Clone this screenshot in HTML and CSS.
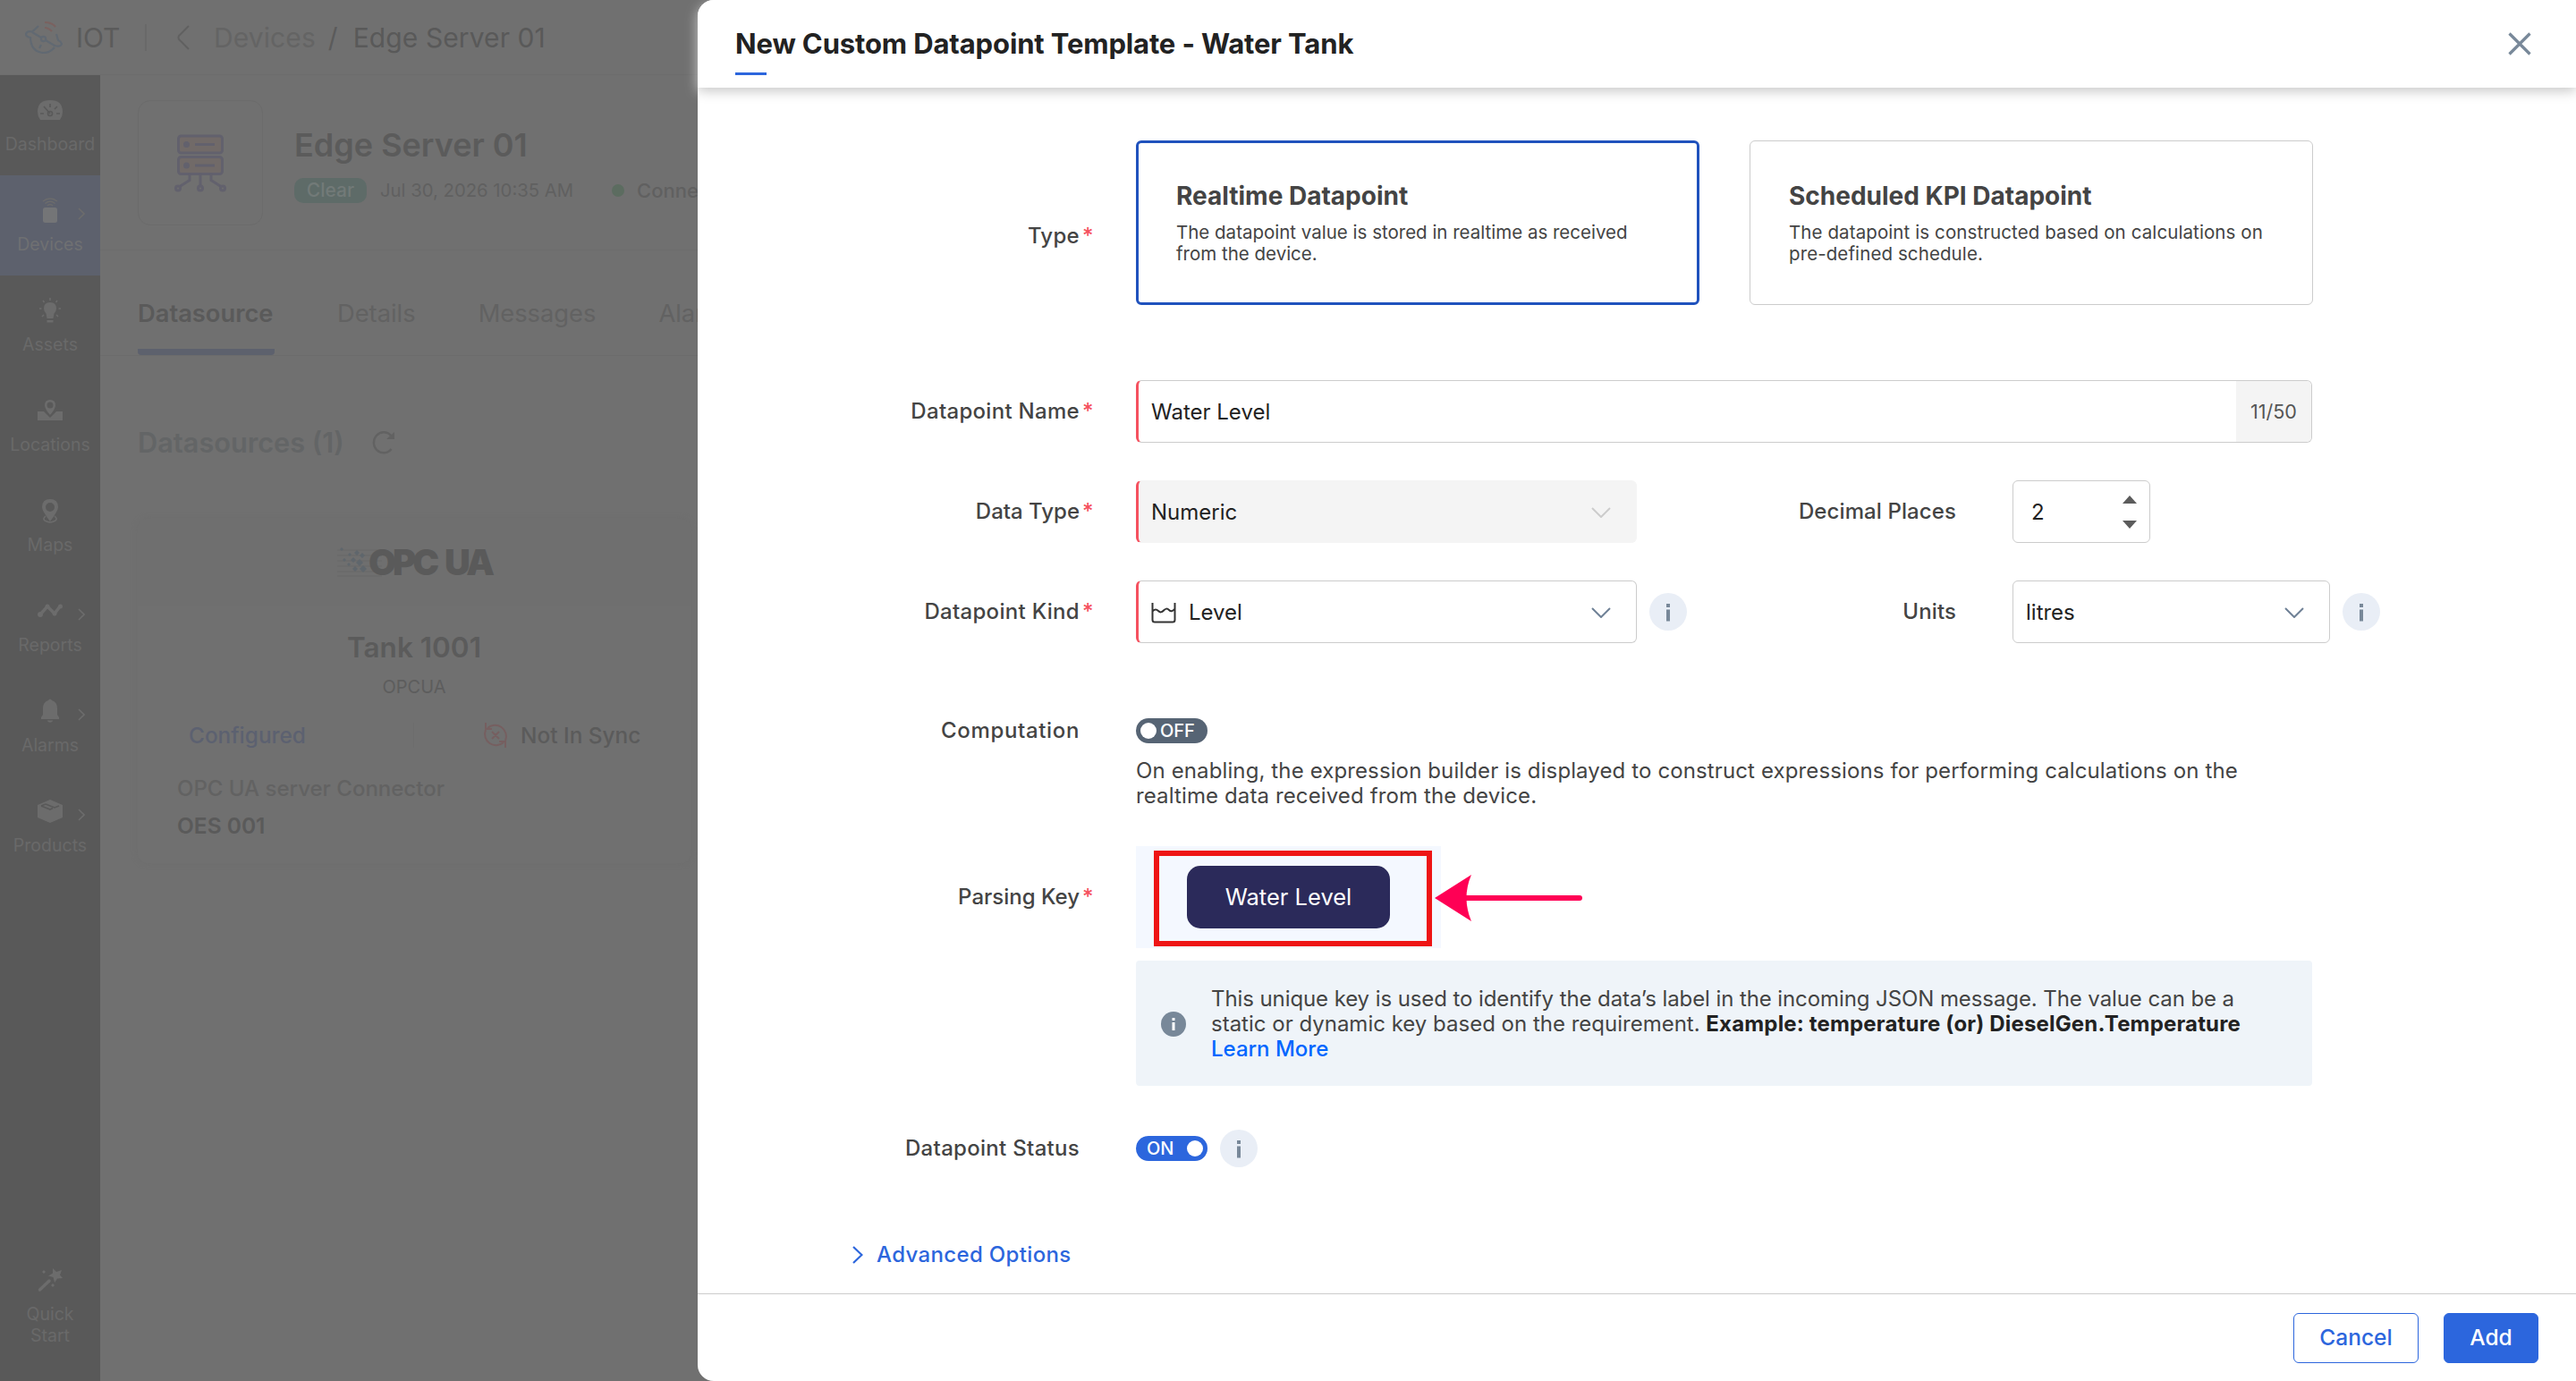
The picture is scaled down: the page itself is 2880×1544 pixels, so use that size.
FILE: index.html
```html
<!DOCTYPE html>
<html lang="en">
  <head>
    <meta charset="UTF-8" />
    <meta name="viewport" content="width=device-width, initial-scale=1.0" />
    <title>New Custom Datapoint Template - Water Tank</title>
    <link rel="stylesheet" href="styles.css" />
  </head>
  <body>
    <header class="topbar">
      <svg class="logo" viewBox="0 0 42 36" fill="none" stroke-width="2.2">
        <g stroke="#616972">
          <path d="M15 5 L8 11.500 Q2 10 1 14 Q1 17 6 18 M8 12 L18 18 M23 21 L33 27 Q40 29 41 25 Q40 22 37 21 L35 14" />
          <path d="M6 17 Q6 34 20.500 35 Q28 35 33 29" />
          <circle cx="20.500" cy="19.500" r="2.600" />
          <path d="M18 26 L16 30" />
        </g>
        <path d="M22 1 Q30 1 34 6 M22 7 Q26 7 30 11" stroke="#7a6260" />
      </svg>
      <span class="brand">IOT</span>
      <span class="topbar-line"></span>
      <svg class="back" viewBox="0 0 14 28"><path d="M13 1 L2 12 Q1 14 2 16 L13 27" /></svg>
      <span class="crumb">Devices</span>
      <span class="slash">/</span>
      <span class="crumb current">Edge Server 01</span>
    </header>

    <div class="page">
      <nav class="sidebar">
        <a class="nav-item">
          <svg viewBox="0 0 28 28">
            <path d="M3 25 Q0 21 0 16 Q0 3 14 3 Q28 3 28 16 Q28 21 25 25 Z" />
            <g class="cut"><path d="M7 10 L14 18 M14 7 V11 M22 10 L19 13 M3 18 H7 M21 18 H25" /><circle cx="14" cy="18" r="2.500" /></g>
          </svg>
          <span>Dashboard</span>
        </a>
        <a class="nav-item active">
          <svg viewBox="0 0 28 28">
            <rect x="6" y="11" width="16" height="17" rx="2.500" />
            <path class="line" d="M6 4 Q14 -2 22 4 M8.500 6.500 Q14 2 19.500 6.500 M11 9 Q14 6 17 9" />
          </svg>
          <span>Devices</span>
          <svg class="more" viewBox="0 0 8 14"><path d="M1 1 L7 7 L1 13" /></svg>
        </a>
        <a class="nav-item">
          <svg viewBox="0 0 28 28">
            <path d="M14 5 Q21 5 21 12 Q21 15 18.500 17.500 L17.500 23 H10.500 L9.500 17.500 Q7 15 7 12 Q7 5 14 5 Z M10.500 25 H17.500 V27.500 H10.500 Z" />
            <path class="line" d="M14 0 V3 M6 3 L7.500 5 M22 3 L20.500 5 M2 12 H4.500 M23.500 12 H26 M5 21 L7 19 M23 21 L21 19" />
          </svg>
          <span>Assets</span>
        </a>
        <a class="nav-item">
          <svg viewBox="0 0 28 28">
            <path d="M0 15 H7 L14 22 L21 15 H28 V25 H0 Z" />
            <path fill-rule="evenodd" d="M14 2 Q20 2 20 8 Q20 12 14 19 Q8 12 8 8 Q8 2 14 2 Z M14 4.500 A3.500 3.500 0 1 0 14 11.500 A3.500 3.500 0 1 0 14 4.500 Z" />
          </svg>
          <span>Locations</span>
        </a>
        <a class="nav-item">
          <svg viewBox="0 0 28 28">
            <path fill-rule="evenodd" d="M14 1 Q23 1 23 10 Q23 14 14 26 Q5 14 5 10 Q5 1 14 1 Z M14 5 A5 5 0 1 0 14 15 A5 5 0 1 0 14 5 Z" />
            <path class="line" d="M9 20 Q3 25 14 27 Q25 25 19 20" />
          </svg>
          <span>Maps</span>
        </a>
        <a class="nav-item">
          <svg viewBox="0 0 28 28">
            <path class="line thick" d="M3 18 L11 9 L19 17 L25 9" />
            <circle cx="3" cy="18" r="3" /><circle cx="11" cy="9" r="2.500" /><circle cx="19" cy="17" r="2.500" /><circle cx="25.500" cy="9" r="2.500" />
          </svg>
          <span>Reports</span>
          <svg class="more" viewBox="0 0 8 14"><path d="M1 1 L7 7 L1 13" /></svg>
        </a>
        <a class="nav-item">
          <svg viewBox="0 0 28 28">
            <path d="M12 2 Q14 -1 16 2 Q22 4 22 11 V18 L24 21 V23 H4 V21 L6 18 V11 Q6 4 12 2 Z M10.500 24.500 H17.500 Q14 29 10.500 24.500 Z" />
          </svg>
          <span>Alarms</span>
          <svg class="more" viewBox="0 0 8 14"><path d="M1 1 L7 7 L1 13" /></svg>
        </a>
        <a class="nav-item">
          <svg viewBox="0 0 28 28">
            <path d="M14 1 L28 7 V21 L14 27 L0 21 V7 Z" />
            <path class="cut" d="M4 8 L14 12 L17 10.500 M9 6 L19 10 L24 8 M4 8 L9 6" />
          </svg>
          <span>Products</span>
          <svg class="more" viewBox="0 0 8 14"><path d="M1 1 L7 7 L1 13" /></svg>
        </a>
        <a class="nav-item quick">
          <svg viewBox="0 0 28 28">
            <path d="M17 1 L21 5 L27 3 L25 8.500 L28 12 L22 12.500 L19 17 L17.500 11 L12 9.500 L17 6.500 Z M7 3 L9 5 L7 7 L5 5 Z M17 18 L19 20 L17 22 L15 20 Z" />
            <path class="line thick" d="M2.500 25 L13 15" />
          </svg>
          <span>Quick<br />Start</span>
        </a>
      </nav>

      <main class="content">
        <section class="device">
          <div class="device-icon">
            <svg viewBox="0 0 58 64" fill="none" stroke="#62616d" stroke-width="3">
              <rect x="4.500" y="1.500" width="49" height="19" rx="3" fill="#716a68" />
              <rect x="4.500" y="25" width="49" height="19" rx="3" fill="#716a68" />
              <path d="M23 11 H45 M23 34.500 H45 M17 44 V51 L6 58 M29 44 V57 M41 44 V51 L52 58" />
              <g fill="#62616d"><circle cx="13.500" cy="11" r="2" /><circle cx="13.500" cy="34.500" r="2" /></g>
              <circle cx="4" cy="60" r="2.500" /><circle cx="29" cy="60" r="2.500" /><circle cx="54" cy="60" r="2.500" />
            </svg>
          </div>
          <div>
            <h1>Edge Server 01</h1>
            <div class="device-meta">
              <span class="badge">Clear</span>
              <span class="date">Jul 30, 2026 10:35 AM</span>
              <span class="dot"></span>
              <span class="state">Connected</span>
            </div>
          </div>
        </section>

        <div class="tabs">
          <span class="tab selected">Datasource</span>
          <span class="tab">Details</span>
          <span class="tab">Messages</span>
          <span class="tab">Alarms</span>
        </div>

        <div class="list-head">
          <h2>Datasources (1)</h2>
          <svg viewBox="0 0 26 26"><path class="arc" d="M22 5 A11 11.500 0 1 0 22.500 20" /><path d="M26 1 V9 H17 Z" /></svg>
        </div>

        <div class="source-card">
          <div class="opc">
            <svg viewBox="0 0 66 33">
              <path d="M0 3 H50 M0 9 H50 M0 15 H50 M0 21 H50 M0 27 H50 M0 32 H50" stroke="#686868" />
              <path d="M5 0 l2 2 l-2 2 l-2 -2 Z M14 6 l2 2 l-2 2 l-2 -2 Z M22 3 l3 3 l-3 3 l-3 -3 Z M28 6 l3 3 l-3 3 l-3 -3 Z M8 12 l2 2 l-2 2 l-2 -2 Z M18 11 l3 3 l-3 3 l-3 -3 Z M25 13 l4 4 l-4 4 l-4 -4 Z M20 21 l3 3 l-3 3 l-3 -3 Z M29 20 l4 4 l-4 4 l-4 -4 Z M13 17 l2 2 l-2 2 l-2 -2 Z" fill="#5f666c" />
            </svg>
            <b>OPC UA</b>
          </div>
          <h3>Tank 1001</h3>
          <p class="kind">OPCUA</p>
          <div class="status-row">
            <span class="configured">Configured</span>
            <span class="sync">
              <svg viewBox="0 0 28 28"><path d="M5 6 A12.500 12.500 0 0 1 25 20 M23 22 A12.500 12.500 0 0 1 3 8 M3 0 V7 H10 M25 28 V21 H18 M10 10 L18 18 M18 10 L10 18" /></svg>
              Not In Sync
            </span>
          </div>
          <p class="connector">OPC UA server Connector</p>
          <p class="connector-name">OES 001</p>
        </div>
      </main>
    </div>

    <aside class="panel">
      <div class="panel-head">
        <h2>New Custom Datapoint Template - Water Tank</h2>
        <svg class="close" viewBox="0 0 26 26"><path d="M1.500 1.500 L24.500 24.500 M24.500 1.500 L1.500 24.500" /></svg>
      </div>

      <form class="panel-body">
        <div class="row type-row">
          <label class="required">Type</label>
          <div class="types">
            <div class="type chosen">
              <h4>Realtime Datapoint</h4>
              <p>The datapoint value is stored in realtime as received<br />from the device.</p>
            </div>
            <div class="type">
              <h4>Scheduled KPI Datapoint</h4>
              <p>The datapoint is constructed based on calculations on<br />pre-defined schedule.</p>
            </div>
          </div>
        </div>

        <div class="row">
          <label class="required">Datapoint Name</label>
          <div class="field must wide">Water Level<span class="count">11/50</span></div>
        </div>

        <div class="row">
          <label class="required tight">Data Type</label>
          <div class="field must select disabled">
            Numeric
            <svg class="caret" viewBox="0 0 22 12"><path d="M1 1 L11 11 L21 1" /></svg>
          </div>
          <label class="second">Decimal Places</label>
          <div class="field number">
            2
            <svg viewBox="0 0 16 37"><path d="M8 0 L16 9 H0 Z M0 28 H16 L8 37 Z" /></svg>
          </div>
        </div>

        <div class="row">
          <label class="required">Datapoint Kind</label>
          <div class="field must select">
            <svg class="level" viewBox="0 0 28 24"><path d="M1.500 1 V20 Q1.500 22.500 4 22.500 H24 Q26.500 22.500 26.500 20 V1 M2 10 Q5 7 8 10 Q11 13 14 9.500 Q17 6 20 9 Q23 12 26 8" /></svg>
            Level
            <svg class="caret" viewBox="0 0 22 12"><path d="M1 1 L11 11 L21 1" /></svg>
          </div>
          <svg class="info" viewBox="0 0 42 42"><circle cx="21" cy="21" r="21" /><path d="M19 12 h4 v4 h-4 Z M19 18.500 h4 v13 h-4 Z" /></svg>
          <label class="second units">Units</label>
          <div class="field unit">
            litres
            <svg class="caret" viewBox="0 0 22 12"><path d="M1 1 L11 11 L21 1" /></svg>
          </div>
          <svg class="info" viewBox="0 0 42 42"><circle cx="21" cy="21" r="21" /><path d="M19 12 h4 v4 h-4 Z M19 18.500 h4 v13 h-4 Z" /></svg>
        </div>

        <div class="row computation">
          <label>Computation</label>
          <span class="toggle">OFF</span>
        </div>
        <p class="hint">On enabling, the expression builder is displayed to construct expressions for performing calculations on the<br />realtime data received from the device.</p>

        <div class="row parsing">
          <label class="required tight">Parsing Key</label>
          <div class="key-area">
            <div class="key-frame"><span class="key">Water Level</span></div>
            <svg class="arrow" viewBox="0 0 166 52"><path d="M0 26 L41 0 Q30 26 41 52 Z" /><path d="M34 26 H162" class="shaft" /></svg>
          </div>
        </div>

        <div class="note">
          <svg viewBox="0 0 28 28"><circle cx="14" cy="14" r="14" /><path d="M12.500 7 h3 v3 h-3 Z M12.500 12 h3 v9 h-3 Z" /></svg>
          <p>
            <span class="note-text">This unique key is used to identify the data’s label in the incoming JSON message. The value can be a</span><br />
            static or dynamic key based on the requirement. <b>Example: temperature (or) DieselGen.Temperature</b><br />
            <a>Learn More</a>
          </p>
        </div>

        <div class="row status">
          <label>Datapoint Status</label>
          <span class="toggle on">ON</span>
          <svg class="info" viewBox="0 0 42 42"><circle cx="21" cy="21" r="21" /><path d="M19 12 h4 v4 h-4 Z M19 18.500 h4 v13 h-4 Z" /></svg>
        </div>

        <a class="advanced">
          <svg viewBox="0 0 12 20"><path d="M1 1 L10.500 10 L1 19" /></svg>
          Advanced Options
        </a>
      </form>

      <footer class="panel-foot">
        <button class="cancel">Cancel</button>
        <button class="add">Add</button>
      </footer>
    </aside>
  </body>
</html>
```
FILE: styles.css
```css
* {
  box-sizing: border-box;
}

body {
  position: relative;
  width: 2880px;
  height: 1544px;
  margin: 0;
  overflow: hidden;
  background: #707070;
  color: #444;
  font-family: Inter, "Liberation Sans", sans-serif;
  font-size: 24px;
  line-height: 28px;
}

h1, h2, h3, h4, p {
  margin: 0;
}

svg {
  display: block;
  flex: none;
}

/* top bar */
.topbar {
  display: flex;
  align-items: center;
  width: 780px;
  height: 84px;
  padding-left: 28px;
  border-bottom: 1px solid #6d6d6d;
  font-size: 30px;
  color: #5b5b5b;
  white-space: nowrap;
}

.topbar > * {
  flex: none;
}

.logo {
  width: 42px;
  height: 36px;
}

.brand {
  width: 92px;
  padding-left: 15px;
}

.topbar-line {
  width: 2px;
  height: 30px;
  background: #696969;
}

.back {
  width: 14px;
  height: 28px;
  margin: 0 27px 0 34px;
  fill: none;
  stroke: #606060;
  stroke-width: 2;
}

.crumb {
  color: #646464;
  letter-spacing: 0.1px;
}

.slash {
  margin: 0 17px 0 14px;
}

.crumb.current {
  color: #595959;
}

/* sidebar */
.page {
  display: flex;
  width: 780px;
  height: 1460px;
}

.sidebar {
  display: flex;
  flex: none;
  flex-direction: column;
  width: 112px;
  background: #595959;
}

.nav-item {
  position: relative;
  display: flex;
  flex-direction: column;
  align-items: center;
  gap: 12px;
  height: 112px;
  padding-top: 25px;
  color: #696969;
  font-size: 19.5px;
  line-height: 24px;
  text-align: center;
}

.nav-item svg {
  width: 28px;
  height: 28px;
  fill: #6c6c6c;
}

.nav-item.active {
  background: #5d616d;
  color: #6f7072;
}

.nav-item.active svg {
  fill: #747577;
}

.nav-item .line {
  fill: none;
  stroke: #6c6c6c;
  stroke-width: 1.5;
}

.nav-item .thick {
  stroke-width: 3.5;
  stroke-linecap: round;
}

.nav-item .cut {
  fill: none;
  stroke: #595959;
  stroke-width: 1.6;
}

.nav-item .more,
.nav-item.active .more {
  position: absolute;
  top: 36px;
  left: 87px;
  width: 8px;
  height: 14px;
  fill: none;
  stroke: #6c6c6c;
  stroke-width: 1.6;
}

.nav-item.quick {
  height: auto;
  margin-top: auto;
  padding-bottom: 39px;
}

/* device page */
.content {
  width: 668px;
  overflow: hidden;
  white-space: nowrap;
}

.device {
  display: flex;
  gap: 35px;
  height: 196px;
  padding: 28px 0 0 42px;
  border-bottom: 1px solid #6c6c6c;
}

.device-icon {
  display: flex;
  flex: none;
  justify-content: center;
  padding-top: 37px;
  width: 140px;
  height: 140px;
  border: 1px solid #6b6b6b;
  border-radius: 14px;
}

.device-icon svg {
  width: 58px;
  height: 65px;
}

.device h1 {
  margin-top: 30px;
  font-size: 36px;
  font-weight: 600;
  line-height: 40px;
  color: #5b5b5b;
}

.device-meta {
  display: flex;
  align-items: center;
  margin-top: 17px;
  color: #606060;
}

.badge {
  width: 81px;
  border-radius: 10px;
  background: #5e6b68;
  color: #727a78;
  font-size: 21px;
  font-weight: 500;
  text-align: center;
}

.date {
  margin-left: 15px;
  width: 259px;
  font-size: 20.3px;
}

.dot {
  width: 14px;
  height: 14px;
  border-radius: 50%;
  background: #5c6c60;
}

.state {
  margin-left: 14px;
  font-size: 22px;
  font-weight: 500;
}

.tabs {
  display: flex;
  gap: 70px;
  height: 118px;
  padding: 57px 0 0 42px;
  border-bottom: 1px solid #6c6c6c;
  font-size: 27.3px;
  color: #626262;
}

.tab {
  flex: none;
  height: 60px;
}

.tab.selected {
  width: 153px;
  border-bottom: 7px solid #5d616d;
  border-radius: 0 0 4px 4px;
  color: #5a5a5a;
  font-weight: 600;
}

.list-head {
  display: flex;
  align-items: center;
  gap: 30px;
  margin: 82px 0 70px 42px;
  height: 30px;
}

.list-head h2 {
  font-size: 30.7px;
  font-weight: 600;
  color: #636566;
}

.list-head svg {
  width: 26px;
  height: 26px;
  fill: #626262;
}

.list-head .arc {
  fill: none;
  stroke: #626262;
  stroke-width: 2.5;
}

.source-card {
  display: flex;
  flex-direction: column;
  width: 618px;
  height: 385px;
  margin-left: 42px;
  padding: 0 44px;
  border-radius: 12px;
  background: linear-gradient(#6f6f6f 97px, #707070 97px);
  box-shadow: 0 0 6px #6d6d6d;
}

.opc {
  display: flex;
  align-items: center;
  align-self: center;
  margin-top: 32px;
  height: 33px;
}

.opc svg {
  width: 66px;
  height: 33px;
  margin-right: -31px;
}

.opc b {
  font-size: 40px;
  font-weight: 900;
  letter-spacing: -4px;
  word-spacing: 6px;
  color: #5a5a5a;
}

.source-card h3 {
  margin-top: 64px;
  font-size: 31.5px;
  font-weight: 600;
  line-height: 30px;
  text-align: center;
  color: #5b5b5b;
}

.kind {
  margin-top: 15px;
  font-size: 20px;
  text-align: center;
  color: #5d5d5d;
}

.status-row {
  display: flex;
  margin: 26px 0 32px;
  height: 28px;
}

.configured {
  width: 265px;
  padding-left: 13px;
  border-right: 1px solid #6d6d6d;
  color: #5c6170;
  font-size: 24.4px;
  font-weight: 500;
}

.sync {
  display: flex;
  gap: 14px;
  padding-left: 77px;
  color: #5b5b5b;
  font-size: 24.4px;
  font-weight: 500;
}

.sync svg {
  width: 28px;
  height: 28px;
  fill: none;
  stroke: #765f60;
  stroke-width: 2;
}

.connector {
  color: #626262;
  font-weight: 500;
}

.connector-name {
  margin-top: 13px;
  color: #5a5a5a;
  font-size: 24.5px;
  font-weight: 600;
}

/* slide-in panel */
.panel {
  position: absolute;
  top: 0;
  right: 0;
  display: flex;
  flex-direction: column;
  width: 2100px;
  height: 1544px;
  border-radius: 18px 0 0 18px;
  background: #fff;
}

.panel-head {
  display: flex;
  align-items: center;
  justify-content: space-between;
  height: 98px;
  padding: 0 50px 0 42px;
  border-radius: 18px 0 0 0;
  background: #fff;
  box-shadow: 0 4px 14px #c8c8c8;
}

.panel-head h2 {
  position: relative;
  font-size: 31px;
  font-weight: 700;
  letter-spacing: -0.13px;
  color: #222;
}

.panel-head h2::after {
  content: "";
  position: absolute;
  left: 0;
  top: 46px;
  width: 35px;
  height: 3px;
  background: #2c66dd;
}

.close {
  width: 26px;
  height: 26px;
  fill: none;
  stroke: #788899;
  stroke-width: 3.2;
}

.panel-body {
  flex: 1;
}

.row {
  display: flex;
  align-items: center;
  margin-bottom: 42px;
}

.row label {
  position: relative;
  width: 427px;
  margin-right: 63px;
  text-align: right;
  font-weight: 500;
  letter-spacing: 0.3px;
  white-space: nowrap;
}

.required::after {
  content: "*";
  position: absolute;
  left: 430px;
  top: 0;
  color: #f5515f;
}

.row .tight {
  letter-spacing: 0;
}

.type-row {
  margin: 59px 0 84px;
}

.type-row .required {
  top: 15px;
}

.types {
  display: flex;
  gap: 56px;
}

.type {
  width: 630px;
  height: 184px;
  padding: 47px 0 0 43px;
  border: 1px solid #ccc;
  border-radius: 6px;
  white-space: nowrap;
}

.type.chosen {
  border: 3px solid #2052bd;
  padding: 45px 0 0 42px;
}

.type h4 {
  font-size: 28px;
  font-weight: 700;
}

.type p {
  margin-top: 15px;
  font-size: 20.5px;
  line-height: 24px;
  letter-spacing: 0.1px;
}

.type.chosen p {
  letter-spacing: 0;
}

.field {
  display: flex;
  align-items: center;
  height: 70px;
  padding-top: 1px;
  border: 1px solid #ccc;
  border-radius: 6px;
  color: #222;
}

.field.must {
  border-left: 3px solid #f5515f;
  padding-left: 14px;
}

.field.wide {
  width: 1315px;
}

.count {
  width: 84px;
  height: 68px;
  margin: -1px 0 0 auto;
  border-radius: 0 5px 5px 0;
  background: #f4f4f4;
  color: #555;
  font-size: 21.5px;
  line-height: 68px;
  text-align: center;
}

.field.select {
  width: 560px;
}

.field.disabled {
  border-color: #f4f4f4;
  border-left-color: #f5515f;
  background: #f4f4f4;
}

.caret {
  width: 22px;
  height: 12px;
  margin: 0 28px 0 auto;
  fill: none;
  stroke: #6f8196;
  stroke-width: 2;
}

.disabled .caret {
  stroke: #ccc;
}

.level {
  width: 28px;
  height: 24px;
  margin-right: 14px;
  fill: none;
  stroke: #333;
  stroke-width: 2;
}

.row .second {
  width: 357px;
  letter-spacing: 0.1px;
}

.row .second.units {
  width: 301px;
}

.field.number {
  justify-content: space-between;
  width: 154px;
  padding: 1px 14px 0 20px;
}

.number svg {
  width: 16px;
  height: 37px;
  fill: #5c5c5c;
}

.field.unit {
  width: 355px;
  padding-left: 14px;
}

.info {
  width: 42px;
  height: 42px;
  margin-left: 14px;
  fill: #788899;
}

.info circle {
  fill: #e9eef6;
}

.toggle {
  position: relative;
  width: 80px;
  height: 28px;
  padding-left: 27px;
  border-radius: 14px;
  background: #566474;
  color: #fff;
  font-size: 20px;
  font-weight: 500;
}

.toggle::after {
  content: "";
  position: absolute;
  left: 5px;
  top: 5px;
  width: 18px;
  height: 18px;
  border-radius: 50%;
  background: #fff;
}

.toggle.on {
  padding-left: 12px;
  background: #2c66dd;
}

.toggle.on::after {
  left: 57px;
}

.computation {
  margin: 84px 0 17px;
}

.computation label {
  letter-spacing: 0.65px;
}

.hint {
  margin-left: 490px;
  letter-spacing: 0.12px;
  white-space: nowrap;
}

.parsing {
  margin: 42px 0 14px;
}

.key-area {
  position: relative;
  width: 341px;
  height: 114px;
  padding: 5px 0 0 20px;
  background: #f4f8ff;
}

.key-frame {
  width: 311px;
  height: 107px;
  padding: 11px 0 0 31px;
  border: 6px solid #ee1515;
}

.key {
  display: block;
  width: 227px;
  height: 70px;
  border-radius: 15px;
  background: #2b2a5a;
  color: #fff;
  font-size: 25.5px;
  line-height: 70px;
  text-align: center;
}

/* pointer laid over the form, right of the key */
.arrow {
  position: absolute;
  left: 334px;
  top: 32px;
  width: 166px;
  height: 52px;
  fill: #ff0055;
}

.shaft {
  stroke: #ff0055;
  stroke-width: 6;
  stroke-linecap: round;
}

.note {
  display: flex;
  align-items: center;
  gap: 28px;
  width: 1315px;
  height: 140px;
  margin-left: 490px;
  padding: 1px 0 0 28px;
  border-radius: 4px;
  background: #eff4f9;
  white-space: nowrap;
}

.note svg {
  width: 28px;
  height: 28px;
  fill: #788899;
}

.note svg path {
  fill: #fff;
}

.note-text {
  letter-spacing: -0.09px;
}

.note b {
  color: #222;
  font-weight: 700;
  letter-spacing: 0.17px;
}

.note a {
  color: #0066ff;
  font-weight: 500;
}

.status {
  margin: 49px 0 84px;
}

.advanced {
  display: flex;
  align-items: center;
  gap: 15px;
  margin-left: 173px;
  color: #2c66dd;
  font-weight: 500;
  letter-spacing: 0.35px;
}

.advanced svg {
  width: 12px;
  height: 20px;
  fill: none;
  stroke: #2c66dd;
  stroke-width: 2.2;
}

.panel-foot {
  display: flex;
  justify-content: flex-end;
  gap: 28px;
  height: 98px;
  padding: 21px 42px 0 0;
  border-top: 1px solid #ccc;
}

.panel-foot button {
  height: 56px;
  padding: 0 0 2px;
  border: 1px solid #2c66dd;
  border-radius: 6px;
  font: 500 24.5px Inter, "Liberation Sans", sans-serif;
}

.cancel {
  width: 140px;
  background: #fff;
  color: #2c66dd;
}

.add {
  width: 106px;
  background: #2c66dd;
  color: #fff;
}
```
